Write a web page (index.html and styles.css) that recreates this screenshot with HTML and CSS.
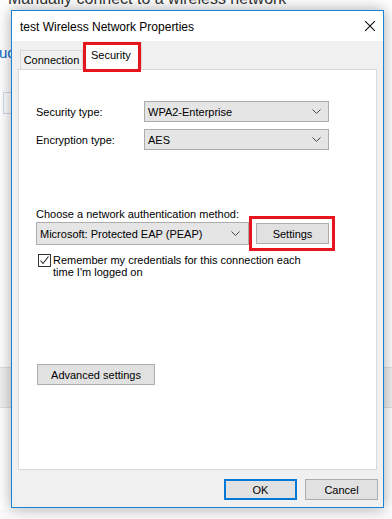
FILE: index.html
```html
<!DOCTYPE html>
<html lang="en">
<head>
    <meta charset="UTF-8">
    <meta name="viewport" content="width=device-width, initial-scale=1.0">
    <title>test Wireless Network Properties</title>
    <link rel="stylesheet" href="styles.css">
</head>
<body>

    <!-- fenetre derriere (assistant de connexion) -->
    <div class="backwin">
        <div class="back-title">Manually connect to a wireless network</div>
        <div class="back-link">uc</div>
        <div class="back-field"></div>
        <div class="back-bar"></div>
    </div>

    <div class="dialog">
        <div class="titlebar">
            <span class="title">test Wireless Network Properties</span>
            <svg class="close" width="10" height="10" viewBox="0 0 10 10">
                <path d="M0 0 L10 10 M10 0 L0 10" stroke="#111" stroke-width="1.1" fill="none"/>
            </svg>
        </div>

        <div class="dlg-body">
            <div class="tabs">
                <div class="tab">Connection</div>
                <div class="tab active">Security<span class="mark"></span></div>
            </div>

            <div class="panel">
                <div class="row">
                    <span class="label">Security type:</span>
                    <div class="select wide">
                        <span>WPA2-Enterprise</span>
                        <svg width="9" height="5" viewBox="0 0 9 5"><polyline points="0.5,0.5 4.5,4.5 8.5,0.5" fill="none" stroke="#444" stroke-width="1"/></svg>
                    </div>
                </div>
                <div class="row">
                    <span class="label">Encryption type:</span>
                    <div class="select wide">
                        <span>AES</span>
                        <svg width="9" height="5" viewBox="0 0 9 5"><polyline points="0.5,0.5 4.5,4.5 8.5,0.5" fill="none" stroke="#444" stroke-width="1"/></svg>
                    </div>
                </div>

                <div class="auth-label">Choose a network authentication method:</div>
                <div class="auth-row">
                    <div class="select auth">
                        <span>Microsoft: Protected EAP (PEAP)</span>
                        <svg width="9" height="5" viewBox="0 0 9 5"><polyline points="0.5,0.5 4.5,4.5 8.5,0.5" fill="none" stroke="#444" stroke-width="1"/></svg>
                    </div>
                    <button class="btn settings">Settings<span class="mark"></span></button>
                </div>

                <div class="check-row">
                    <span class="checkbox">
                        <svg width="11" height="11" viewBox="0 0 11 11"><polyline points="1.5,5.5 4,8.5 9.5,1.5" fill="none" stroke="#222" stroke-width="1.1"/></svg>
                    </span>
                    <span class="check-text">Remember my credentials for this connection each<br>time I'm logged on</span>
                </div>

                <button class="btn advanced">Advanced settings</button>
            </div>

            <div class="actions">
                <button class="btn default">OK</button>
                <button class="btn">Cancel</button>
            </div>
        </div>
    </div>

</body>
</html>
```

FILE: styles.css
```css
body {
    margin: 0;
    width: 392px;
    height: 519px;
    overflow: hidden;
    position: relative;
    background-color: #fafafa;
    font-family: 'Liberation Sans', Arial, sans-serif;
    font-size: 11px;
    color: #000;
}

/* Fenetre derriere */
.backwin {
    height: 519px;
    background-color: #fff;
}

.back-title {
    font-size: 16px;
    color: #333;
    line-height: 16px;
    margin-top: -9px;
    padding-left: 8px;
    white-space: nowrap;
}

.back-link {
    margin-top: 40px;
    font-size: 15px;
    line-height: 12px;
    color: #0066cc;
    margin-left: -1px;
}

.back-field {
    margin-top: 33px;
    margin-left: 3px;
    width: 40px;
    height: 20px;
    border: 1px solid #cfdcec;
}

.back-bar {
    margin-top: 253px;
    height: 39px;
    background-color: #f0f0f0;
    border-top: 1px solid #dfdfdf;
    border-bottom: 1px solid #dfdfdf;
}

/* Boite de dialogue */
.dialog {
    position: absolute;
    left: 11px;
    top: 10px;
    width: 373px;
    height: 498px;
    box-sizing: border-box;
    border: 1px solid #1883d7;
    background-color: #f0f0f0;
    box-shadow: 0 0 14px rgba(0, 0, 0, 0.35);
}

.titlebar {
    height: 30px;
    background-color: #fff;
    display: flex;
    align-items: center;
    justify-content: space-between;
    padding: 0 8px;
}

.title {
    font-size: 12px;
    padding-top: 1px;
}

.close {
    display: block;
    margin-top: -1px;
}

.dlg-body {
    padding-top: 2px;
}

.tabs {
    display: flex;
    align-items: flex-end;
    height: 26px;
    margin-left: 8px;
    position: relative;
    z-index: 1;
}

.tab {
    width: 63px;
    box-sizing: border-box;
    height: 19px;
    line-height: 18px;
    text-align: center;
    border: 1px solid #d9d9d9;
    border-bottom: none;
    background-color: #f0f0f0;
}

.tab.active {
    position: relative;
    width: 59px;
    height: 28px;
    line-height: 24px;
    margin-bottom: -1px;
    background-color: #fff;
    border-left: none;
    text-align: left;
    padding-left: 8px;
}

.mark {
    position: absolute;
    border: 3px solid #e8141e;
    pointer-events: none;
}

.tab.active .mark {
    left: 0;
    right: 0;
    top: -1px;
    bottom: -2px;
}

.panel {
    margin: 0 6px;
    height: 401px;
    box-sizing: border-box;
    background-color: #fff;
    border: 1px solid #d9d9d9;
    padding: 31px 0 0 17px;
}

.row {
    display: flex;
    align-items: center;
    height: 21px;
    margin-bottom: 7px;
}

.label {
    width: 108px;
}

.select {
    height: 21px;
    box-sizing: border-box;
    display: flex;
    align-items: center;
    justify-content: space-between;
    padding: 0 7px 0 3px;
    background-color: #e5e5e5;
    border: 1px solid #acacac;
}

.select svg {
    display: block;
}

.select.wide {
    width: 185px;
}

.auth-label {
    margin-top: 57px;
    line-height: 15px;
}

.auth-row {
    display: flex;
    align-items: center;
    gap: 7px;
}

.select.auth {
    width: 213px;
    height: 23px;
    padding-right: 8px;
}

.btn {
    font-family: inherit;
    font-size: 11px;
    color: #000;
    height: 21px;
    box-sizing: border-box;
    padding: 0;
    background-color: #e1e1e1;
    border: 1px solid #adadad;
    width: 73px;
}

.settings {
    position: relative;
}

.settings .mark {
    left: -8px;
    right: -7px;
    top: -8px;
    bottom: -8px;
}

.check-row {
    display: flex;
    align-items: flex-start;
    gap: 2px;
    margin-top: 9px;
    margin-left: 2px;
}

.checkbox {
    width: 13px;
    height: 13px;
    box-sizing: border-box;
    border: 1px solid #333;
    background-color: #fff;
    display: flex;
    align-items: center;
    justify-content: center;
}

.check-text {
    line-height: 12px;
}

.advanced {
    display: block;
    width: 118px;
    margin-top: 86px;
    margin-left: 1px;
}

.actions {
    display: flex;
    justify-content: flex-end;
    gap: 8px;
    padding: 9px 5px 0 0;
}

.btn.default {
    border: 2px solid #0078d7;
}
```
